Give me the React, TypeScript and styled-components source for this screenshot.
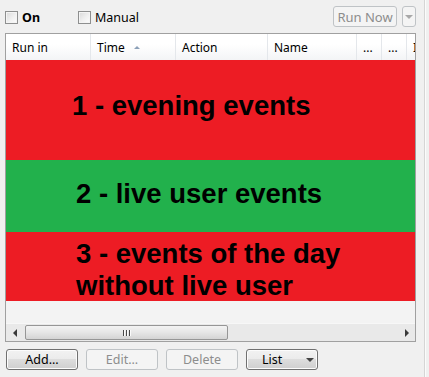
import React from "react";
import styled, { createGlobalStyle } from "styled-components";

const GlobalStyle = createGlobalStyle`
  html, body {
    margin: 0;
    padding: 0;
    background: #f0f0f0;
  }
  body {
    font-family: "Noto Sans", "Open Sans", "Liberation Sans", sans-serif;
    font-size: 12px;
    color: #000;
  }
`;

interface rowType {
  lines: string[];
  color: string;
  height: number;
  padTop: number;
  padLeft: number;
}

interface columnType {
  title: string;
  width: number;
  sorted?: boolean;
}

const columns: columnType[] = [
  { title: "Run in", width: 85 },
  { title: "Time", width: 85, sorted: true },
  { title: "Action", width: 92 },
  { title: "Name", width: 89 },
  { title: "...", width: 25 },
  { title: "...", width: 25 },
  { title: "I", width: 40 },
];

const rows: rowType[] = [
  { lines: ["1 - evening events"], color: "#ed1c24", height: 100, padTop: 30, padLeft: 66 },
  { lines: ["2 - live user events"], color: "#22b14c", height: 72, padTop: 18, padLeft: 70 },
  { lines: ["3 - events of the day", "without live user"], color: "#ed1c24", height: 69, padTop: 6, padLeft: 70 },
];

const Page = styled.div`
  display: flex;
  width: 429px;
  height: 377px;
  overflow: hidden;
`;

const Main = styled.div`
  width: 411px;
  padding-left: 5px;
  display: flex;
  flex-direction: column;
`;

const Rule = styled.div`
  margin-left: 8px;
  width: 1px;
  height: 100%;
  background: #d5d5d5;
  border-right: 1px solid #fbfbfb;
`;

const TopBar = styled.div`
  height: 27px;
  padding-top: 6px;
  display: flex;
  align-items: flex-start;
`;

const CheckLabel = styled.label<{ $bold?: boolean; $width: number }>`
  display: flex;
  align-items: center;
  gap: 4px;
  width: ${(p) => p.$width}px;
  height: 20px;
  margin-top: 1px;
  font-weight: ${(p) => (p.$bold ? 700 : 400)};
  font-size: 12.5px;
`;

const Box = styled.span`
  width: 11px;
  height: 11px;
  border: 1px solid #8e8f8f;
  background: linear-gradient(135deg, #d9d9d9 0%, #f0f0f0 55%, #fdfdfd 100%);
  box-shadow: inset 0 0 0 1px #f4f4f4;
`;

const Spacer = styled.div`
  flex: 1;
`;

const Btn = styled.button<{ $disabled?: boolean; $width: number }>`
  box-sizing: border-box;
  width: ${(p) => p.$width}px;
  height: 21px;
  padding: 0;
  border-radius: 3px;
  font-family: inherit;
  font-size: 12.5px;
  display: flex;
  align-items: center;
  justify-content: center;
  border: 1px solid ${(p) => (p.$disabled ? "#bfc3c6" : "#707070")};
  color: ${(p) => (p.$disabled ? "#8d8d8d" : "#000")};
  background: ${(p) =>
    p.$disabled
      ? "#f4f4f4"
      : "linear-gradient(#f2f2f2 0%, #ebebeb 49%, #dddddd 50%, #cfcfcf 100%)"};
  box-shadow: inset 0 0 0 1px ${(p) => (p.$disabled ? "#f4f4f4" : "#fcfcfc")};
`;

const RunNow = styled(Btn)`
  font-size: 13px;
`;

const SplitBtn = styled(Btn)`
  justify-content: flex-start;
  padding-left: 15px;
  gap: 24px;
`;

const Arrow = styled.span<{ $color: string }>`
  width: 0;
  height: 0;
  border-left: 4px solid transparent;
  border-right: 4px solid transparent;
  border-top: 4px solid ${(p) => p.$color};
`;

const ListBox = styled.div`
  box-sizing: border-box;
  height: 309px;
  border: 1px solid #a0a0a0;
  background: #f3f3f3;
  display: flex;
  flex-direction: column;
  overflow: hidden;
`;

const Header = styled.div`
  display: flex;
  height: 26px;
  flex-shrink: 0;
  background: linear-gradient(#ffffff 0%, #ffffff 40%, #f3f4f6 100%);
`;

const HeadCell = styled.div<{ $width: number }>`
  box-sizing: border-box;
  flex-shrink: 0;
  width: ${(p) => p.$width}px;
  padding-left: 6px;
  display: flex;
  align-items: center;
  gap: 9px;
  border-right: 1px solid #e4e7eb;
  white-space: nowrap;
  overflow: hidden;
`;

const SortMark = styled.span`
  width: 0;
  height: 0;
  border-left: 3px solid transparent;
  border-right: 3px solid transparent;
  border-bottom: 3px solid #8ba0b8;
`;

const Row = styled.div<{ $color: string; $height: number; $padTop: number; $padLeft: number }>`
  box-sizing: border-box;
  flex-shrink: 0;
  height: ${(p) => p.$height}px;
  background: ${(p) => p.$color};
  padding-top: ${(p) => p.$padTop}px;
  padding-left: ${(p) => p.$padLeft}px;
  font-family: "Liberation Sans", Arial, sans-serif;
  font-weight: 700;
  font-size: 27.5px;
  line-height: 32px;
  color: #000;
  white-space: nowrap;
`;

const Filler = styled.div`
  flex: 1;
`;

const HScroll = styled.div`
  height: 17px;
  display: flex;
  align-items: center;
  background: #e9e9e9;
  border-top: 1px solid #f7f7f7;
  flex-shrink: 0;
`;

const ScrollArrow = styled.span<{ $dir: "left" | "right" }>`
  width: 17px;
  display: flex;
  justify-content: center;
  &::before {
    content: "";
    width: 0;
    height: 0;
    border-top: 4px solid transparent;
    border-bottom: 4px solid transparent;
    ${(p) => (p.$dir === "left" ? "border-right: 4px solid #3a3a3a;" : "border-left: 4px solid #3a3a3a;")}
  }
`;

const Thumb = styled.div`
  box-sizing: border-box;
  width: 203px;
  height: 15px;
  margin-left: 2px;
  border: 1px solid #969696;
  border-radius: 2px;
  background: linear-gradient(#f3f3f3 0%, #e6e6e6 50%, #d4d4d4 100%);
  display: flex;
  align-items: center;
  justify-content: center;
  gap: 1px;
`;

const Grip = styled.span`
  width: 1px;
  height: 6px;
  background: #4a4a4a;
  border-right: 1px solid #fafafa;
`;

const BottomBar = styled.div`
  display: flex;
  gap: 8px;
  margin-top: 7px;
  padding-left: 1px;
`;

const App: React.FC = () => {
  return (
    <Page>
      <GlobalStyle />
      <Main>
        <TopBar>
          <CheckLabel $bold $width={73}>
            <Box />
            On
          </CheckLabel>
          <CheckLabel $width={120}>
            <Box />
            Manual
          </CheckLabel>
          <Spacer />
          <RunNow $disabled $width={64}>Run Now</RunNow>
          <div style={{ width: 5 }} />
          <Btn $disabled $width={14}>
            <Arrow $color="#a8a8a8" />
          </Btn>
        </TopBar>
        <ListBox>
          <Header>
            {columns.map((c, i) => (
              <HeadCell key={i} $width={c.width}>
                {c.title}
                {c.sorted && <SortMark />}
              </HeadCell>
            ))}
          </Header>
          {rows.map((r, i) => (
            <Row key={i} $color={r.color} $height={r.height} $padTop={r.padTop} $padLeft={r.padLeft}>
              {r.lines.map((l, j) => (
                <div key={j}>{l}</div>
              ))}
            </Row>
          ))}
          <Filler />
          <HScroll>
            <ScrollArrow $dir="left" />
            <Thumb>
              <Grip />
              <Grip />
              <Grip />
            </Thumb>
            <Spacer />
            <ScrollArrow $dir="right" />
          </HScroll>
        </ListBox>
        <BottomBar>
          <Btn $width={72}>Add...</Btn>
          <Btn $disabled $width={72}>Edit...</Btn>
          <Btn $disabled $width={72}>Delete</Btn>
          <SplitBtn $width={72}>
            List
            <Arrow $color="#444" />
          </SplitBtn>
        </BottomBar>
      </Main>
      <Rule />
    </Page>
  );
};

export default App;
